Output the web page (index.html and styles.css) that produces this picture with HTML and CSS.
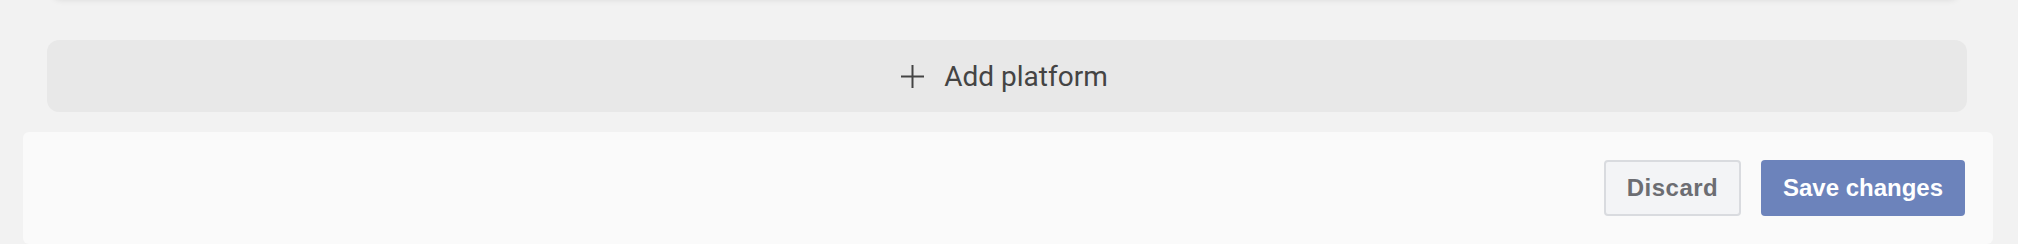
FILE: index.html
```html
<!DOCTYPE html>
<html lang="en">
<head>
<meta charset="utf-8">
<title>Platforms</title>
<link rel="stylesheet" href="styles.css">
</head>
<body>
<div class="page">
  <div class="content">
    <div class="card-tail"></div>
    <button class="add-platform" type="button">
      <svg class="plus" width="23" height="23" viewBox="0 0 23 23" aria-hidden="true">
        <path d="M11.5 0V23M0 11.5H23" stroke="#444" stroke-width="2" fill="none"/>
      </svg>
      <span>Add platform</span>
    </button>
  </div>
  <footer class="actions">
    <button class="btn btn-secondary" type="button">Discard</button>
    <button class="btn btn-primary" type="button">Save changes</button>
  </footer>
</div>
</body>
</html>
```

FILE: styles.css
```css
html, body {
  margin: 0;
  padding: 0;
  background: #f2f2f2;
  height: 100%;
  overflow: hidden;
}

.page {
  padding: 0 25px 0 23px;
}

.content {
  padding: 0 26px 0 24px;
}

.card-tail {
  height: 20px;
  margin-top: -22px;
  margin-left: 3px;
  margin-right: 6px;
  background: #f4f4f4;
  border-radius: 0 0 12px 12px;
  box-shadow: 0 2px 6px rgba(0, 0, 0, 0.1);
}

.add-platform {
  display: flex;
  align-items: center;
  justify-content: center;
  gap: 20px;
  width: 100%;
  height: 72px;
  margin-top: 42px;
  padding: 0 5px 0 0;
  border: none;
  border-radius: 12px;
  background: #e8e8e8;
  color: #444444;
  font-family: Roboto, "Noto Sans", sans-serif;
  font-size: 28px;
  font-weight: 400;
  cursor: pointer;
}

.add-platform .plus {
  flex: none;
  display: block;
}

.actions {
  display: flex;
  justify-content: flex-end;
  gap: 20px;
  margin-top: 20px;
  padding: 28px;
  background: #fafafa;
  border-radius: 6px;
}

.btn {
  height: 56px;
  box-sizing: border-box;
  border-radius: 4px;
  font-family: "Liberation Sans", Arial, sans-serif;
  font-size: 24px;
  font-weight: 700;
  cursor: pointer;
}

.btn-secondary {
  width: 137px;
  background: #f3f4f6;
  border: 2px solid #d9dbdf;
  color: #6c6d72;
  letter-spacing: 0.5px;
}

.btn-primary {
  width: 204px;
  background: #6c83bb;
  border: none;
  color: #ffffff;
}
```
